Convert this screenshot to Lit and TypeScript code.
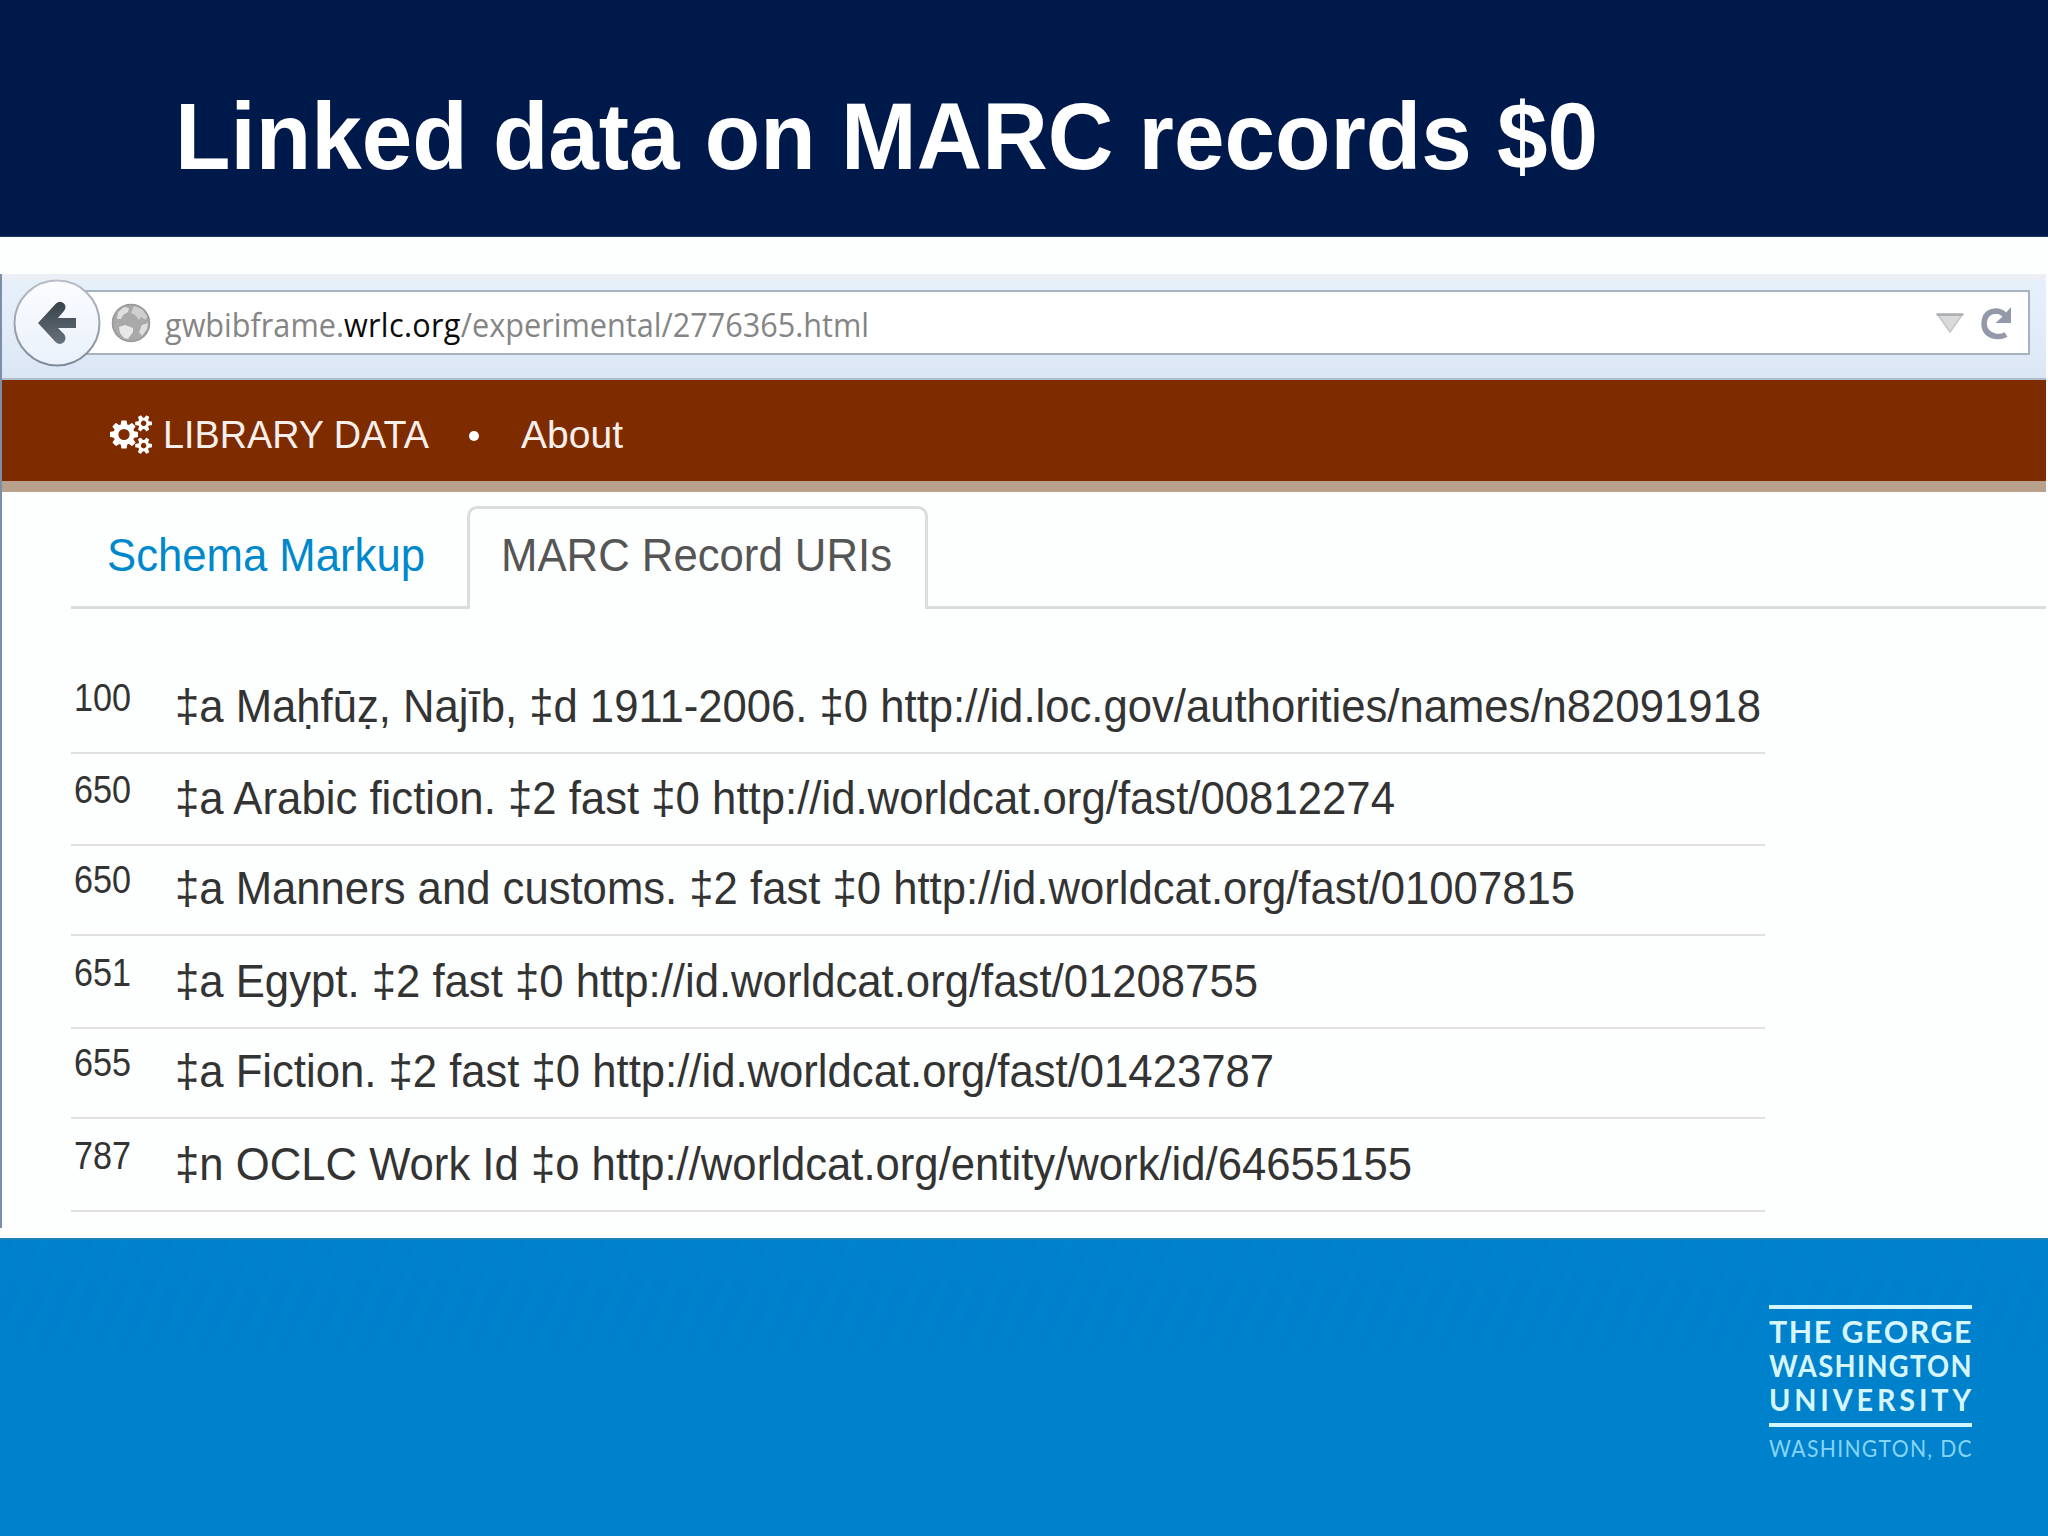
import { LitElement, html, css, svg } from "lit";
import { customElement, property, query } from "lit/decorators.js";

/** A single line of text whose glyphs are condensed or widened to fill a measure. */
@customElement("fit-line")
class FitLine extends LitElement {
  @property({ type: Number }) measure = 100;
  @query(".run") run!: HTMLElement;

  static styles = css`
    :host {
      display: block;
      flex: none;
      white-space: pre;
    }
    .run {
      display: inline-block;
      transform-origin: 0 50%;
    }
  `;

  firstUpdated() {
    this.fit();
    document.fonts?.ready.then(() => this.fit());
  }

  fit() {
    this.style.width = this.measure + "px";
    this.run.style.transform = "none";
    const natural = this.run.getBoundingClientRect().width;
    if (natural > 0) this.run.style.transform = `scaleX(${this.measure / natural})`;
  }

  render() {
    return html`<span class="run"><slot></slot></span>`;
  }
}

interface MarcField {
  tag: string;
  text: string;
  measure: number;
  height: number;
}

const FIELDS: MarcField[] = [
  { tag: "100", text: "‡a Maḥfūẓ, Najīb, ‡d 1911-2006. ‡0 http://id.loc.gov/authorities/names/n82091918", measure: 1586, height: 93 },
  { tag: "650", text: "‡a Arabic fiction. ‡2 fast ‡0 http://id.worldcat.org/fast/00812274", measure: 1220, height: 92 },
  { tag: "650", text: "‡a Manners and customs. ‡2 fast ‡0 http://id.worldcat.org/fast/01007815", measure: 1400, height: 90 },
  { tag: "651", text: "‡a Egypt. ‡2 fast ‡0 http://id.worldcat.org/fast/01208755", measure: 1083, height: 93 },
  { tag: "655", text: "‡a Fiction. ‡2 fast ‡0 http://id.worldcat.org/fast/01423787", measure: 1099, height: 90 },
  { tag: "787", text: "‡n OCLC Work Id ‡o http://worldcat.org/entity/work/id/64655155", measure: 1237, height: 93 },
];

const COG_SMALL =
  "v140q0 16-149 31-12 27-30 52 51 113 51 138 0 4-4 7-122 71-124 71-8 0-46-47t-52-68q-20 2-30 2t-30-2q-14 21-52 68t-46 47q-2 0-124-71-4-3-4-7 0-25 51-138-18-25-30-52-149-15-149-31v-140q0-16 149-31 13-29 30-52-51-113-51-138 0-4 4-7 4-2 35-20t59-34 30-16q8 0 46 46.5t52 67.5q20-2 30-2t30 2q51-71 92-112l6-2q4 0 124 70 4 3 4 7 0 25-51 138 17 23 30 52 149 15 149 31z";
const COGS =
  "M896 896q0-106-75-181t-181-75-181 75-75 181 75 181 181 75 181-75 75-181zm768 512q0-52-38-90t-90-38-90 38-38 90q0 53 37.5 90.5t90.5 37.5 90.5-37.5 37.5-90.5zm0-1024q0-52-38-90t-90-38-90 38-38 90q0 53 37.5 90.5t90.5 37.5 90.5-37.5 37.5-90.5zm-384 421v185q0 10-7 19.5t-16 10.5l-155 24q-11 35-32 76 34 48 90 115 7 11 7 20 0 12-7 19-23 30-82.5 89.5t-78.5 59.5q-11 0-21-7l-115-90q-37 19-77 31-11 108-23 155-7 24-30 24h-186q-11 0-20-7.5t-10-17.5l-23-153q-34-10-75-31l-118 89q-7 7-20 7-11 0-21-8-144-133-144-160 0-9 7-19 10-14 41-53t47-61q-23-44-35-82l-152-24q-10-1-17-9.5t-7-19.5v-185q0-10 7-19.5t16-10.5l155-24q11-35 32-76-34-48-90-115-7-11-7-20 0-12 7-20 22-30 82-89t79-59q11 0 21 7l115 90q34-18 77-32 11-108 23-154 7-24 30-24h186q11 0 20 7.5t10 17.5l23 153q34 10 75 31l118-89q8-7 20-7 11 0 21 8 144 133 144 160 0 8-7 19-12 16-42 54t-45 60q23 48 34 82l152 23q10 2 17 10.5t7 19.5z" +
  "M1920 1338" + COG_SMALL + "M1920 314" + COG_SMALL;

@customElement("app-root")
class AppRoot extends LitElement {
  static styles = css`
    :host {
      display: flex;
      flex-direction: column;
      width: 2048px;
      height: 1536px;
      overflow: hidden;
      background: #fdfefe;
      font-family: "Liberation Sans", Arial, sans-serif;
    }
    .title-band {
      flex: none;
      box-sizing: border-box;
      height: 237px;
      padding: 76px 0 0 175px;
      background: #00194b;
      border-bottom: 1px solid #25386a;
      color: #fff;
      font-size: 94.5px;
      font-weight: 700;
      line-height: 120px;
    }
    .shot {
      flex: none;
      box-sizing: border-box;
      width: 2046px;
      height: 954px;
      margin: 37px 0 10px;
      border-left: 2px solid #7b90a8;
      display: flex;
      flex-direction: column;
    }
    .chrome {
      flex: none;
      box-sizing: border-box;
      height: 106px;
      display: flex;
      align-items: flex-start;
      padding: 5px 16px 0 11px;
      border-bottom: 2px solid #aebdcc;
      background: linear-gradient(#ecf0f6 0, #ecf0f6 5px, #e5f0fa 8px, #e3edf9 50%, #dbe6f5 100%);
    }
    .back {
      flex: none;
      width: 88px;
      height: 88px;
      z-index: 1;
    }
    .address {
      flex: 1;
      box-sizing: border-box;
      height: 65px;
      margin: 11px 0 0 -16px;
      border: 2px solid #a5b2c0;
      background: #fff;
      display: flex;
      align-items: center;
      padding-right: 16px;
    }
    .globe {
      flex: none;
      width: 40px;
      height: 40px;
      margin-left: 24px;
    }
    .url {
      margin: 4px auto 0 14px;
      color: #858585;
      font-family: "Open Sans", "Noto Sans", sans-serif;
      font-size: 33px;
      line-height: 60px;
    }
    .host {
      color: #0b0b0b;
      letter-spacing: 0.35px;
    }
    .drop {
      width: 28px;
      height: 21px;
      margin: 2px 16px 0 0;
    }
    .reload {
      width: 32px;
      height: 34px;
    }
    .nav {
      flex: none;
      box-sizing: border-box;
      height: 112px;
      display: flex;
      align-items: center;
      padding: 8px 0 0 108px;
      background: #7e2b00;
      border-bottom: 11px solid #b8a18d;
      color: #f6efeb;
      font-size: 39px;
      line-height: 60px;
    }
    .cogs {
      width: 42px;
      height: 39px;
      margin-right: 11px;
    }
    .dot {
      width: 10px;
      height: 10px;
      border-radius: 50%;
      background: #fff;
      margin: 2px 42px 0 40px;
    }
    .tabs {
      flex: none;
      height: 117px;
      display: flex;
      align-items: flex-end;
      margin-left: 69px;
      font-size: 47px;
      line-height: 60px;
    }
    .tab {
      box-sizing: border-box;
      height: 103px;
      padding: 19px 0 0 36px;
      border-bottom: 3px solid #dcdcde;
      color: #0088cc;
      width: 396px;
    }
    .active {
      width: 461px;
      padding: 16px 0 0 31px;
      border: 3px solid #dcdcde;
      border-bottom: 0;
      border-radius: 10px 10px 0 0;
      color: #555;
    }
    .tail {
      flex: 1;
      height: 3px;
      background: #dcdcde;
    }
    .records {
      width: 1694px;
      margin: 52px 0 0 69px;
      color: #333;
    }
    .record {
      box-sizing: border-box;
      display: flex;
      align-items: flex-end;
      border-bottom: 2px solid #e2e0e3;
    }
    .tag {
      margin: 0 44px 30px 3px;
      font-size: 38.5px;
      line-height: 48px;
    }
    .text {
      margin-bottom: 18px;
      font-size: 47px;
      line-height: 56px;
    }
    .footer {
      flex: 1;
      box-sizing: border-box;
      display: flex;
      flex-direction: column;
      align-items: flex-end;
      padding: 65px 76px 0 0;
      border-top: 2px solid #1b82b8;
      background:
        linear-gradient(rgba(0, 129, 204, 0.35) 0, #0081cb 150px),
        repeating-linear-gradient(112deg, #007fce 0 9px, #0083ce 14px 19px, #007fce 25px);
    }
    .logo {
      box-sizing: border-box;
      width: 203px;
      border-top: 4px solid #d3f5ff;
      font-family: Lato, sans-serif;
      font-size: 30px;
      font-weight: 700;
      line-height: 34px;
      letter-spacing: 1.5px;
      color: #d6f6ff;
      padding-top: 5px;
    }
    .wide {
      letter-spacing: 4px;
    }
    .place {
      margin-top: 7px;
      padding-top: 7px;
      border-top: 4px solid #d3f5ff;
      color: #86d4f8;
      font-size: 24px;
      font-weight: 400;
      line-height: 28px;
    }
  `;

  private renderBack() {
    return svg`<svg class="back" viewBox="0 0 88 88">
      <defs>
        <linearGradient id="disc" x1="0" y1="0" x2="0" y2="1">
          <stop offset="0" stop-color="#fbfcfe"></stop>
          <stop offset="1" stop-color="#eaf1fb"></stop>
        </linearGradient>
        <linearGradient id="rim" x1="0" y1="0" x2="0" y2="1">
          <stop offset="0" stop-color="#b9bec6"></stop>
          <stop offset="1" stop-color="#7f8a97"></stop>
        </linearGradient>
        <linearGradient id="steel" x1="0" y1="0" x2="0" y2="1">
          <stop offset="0" stop-color="#39424b"></stop>
          <stop offset="1" stop-color="#66717b"></stop>
        </linearGradient>
      </defs>
      <circle cx="44" cy="44" r="42.5" fill="url(#disc)" stroke="url(#rim)" stroke-width="2"></circle>
      <path d="M25 44 43 24.5Q47 21 51 24.500Q54 28 51 32L45 39H63V49H45L51 55Q54 59 51 63Q47 66.500 43 63.500Z" fill="url(#steel)"></path>
    </svg>`;
  }

  private renderGlobe() {
    return svg`<svg class="globe" viewBox="0 0 40 40">
      <circle cx="20" cy="20" r="19" fill="#a9a9a9"></circle>
      <path d="M7 9 13 4 18 5 17 9 12 12 10 16 6 16Z" fill="#dedede"></path>
      <path d="M23 3 31 6 36 13 35 17 30 14 28 17 24 12 20 10Z" fill="#cfcfcf"></path>
      <path d="M8 24 14 22 22 25 22 29 17 36 13 35 9 30Z" fill="#e8e8e8"></path>
      <path d="M31 22 37 20 36 26 31 33 28 29Z" fill="#dedede"></path>
      <circle cx="20" cy="20" r="18.500" fill="none" stroke="#999" stroke-width="1.500"></circle>
    </svg>`;
  }

  render() {
    return html`
      <header class="title-band">
        <fit-line measure="1423">Linked data on MARC records $0</fit-line>
      </header>
      <main class="shot">
        <div class="chrome">
          ${this.renderBack()}
          <div class="address">
            ${this.renderGlobe()}
            <fit-line class="url" measure="704">gwbibframe.<span class="host">wrlc.org</span>/experimental/2776365.html</fit-line>
            <svg class="drop" viewBox="0 0 28 21">
              <path d="M2 2H26L14 19Z" fill="#d9dada" stroke="#c2c3c5" stroke-width="1.500"></path>
              <path d="M0.500 1.500H27.500" stroke="#acadb0" stroke-width="2.500"></path>
            </svg>
            <svg class="reload" viewBox="0 0 32 34">
              <path d="M26 28.500Q22 31 16 30.500Q4.500 28.500 4 18Q4.500 5.500 16 5Q21 5 25 9" fill="none" stroke="#9399a8" stroke-width="5.500"></path>
              <path d="M31 1V17H15.500L22 11Z" fill="#9399a8"></path>
            </svg>
          </div>
        </div>
        <nav class="nav">
          <svg class="cogs" viewBox="0 0 1920 1792" preserveAspectRatio="none"><path d=${COGS} fill="#fff"></path></svg>
          <fit-line measure="266">LIBRARY DATA</fit-line>
          <span class="dot"></span>
          <fit-line measure="102">About</fit-line>
        </nav>
        <div class="tabs">
          <div class="tab"><fit-line measure="318">Schema Markup</fit-line></div>
          <div class="tab active"><fit-line measure="391">MARC Record URIs</fit-line></div>
          <div class="tail"></div>
        </div>
        <section class="records">
          ${FIELDS.map(
            (f) => html`<div class="record" style="height:${f.height}px">
              <fit-line class="tag" measure="57">${f.tag}</fit-line>
              <fit-line class="text" measure=${f.measure}>${f.text}</fit-line>
            </div>`
          )}
        </section>
      </main>
      <footer class="footer">
        <div class="logo">
          <fit-line measure="204">THE GEORGE</fit-line>
          <fit-line measure="204">WASHINGTON</fit-line>
          <fit-line class="wide" measure="206">UNIVERSITY</fit-line>
          <div class="place"><fit-line measure="204">WASHINGTON, DC</fit-line></div>
        </div>
      </footer>
    `;
  }
}
